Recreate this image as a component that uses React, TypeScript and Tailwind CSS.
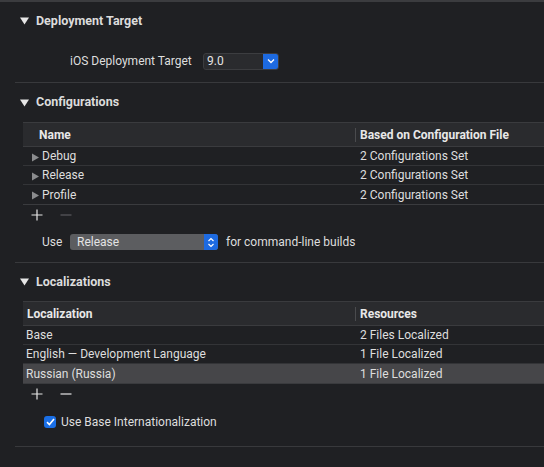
import React from 'react';

const font = { fontFamily: 'Roboto, "Noto Sans", sans-serif' };

function DownTriangle() {
  return (
    <svg width="9" height="8" viewBox="0 0 9 8" className="shrink-0">
      <path d="M0 0.5 H9 L4.5 7.5 Z" fill="#e6e6e6" />
    </svg>
  );
}

function SectionHeader({ title, height }: { title: string; height: string }) {
  return (
    <div className={`flex items-center gap-[7px] pl-[20px] ${height}`}>
      <DownTriangle />
      <span className="text-[12.5px] font-bold text-[#dcdcdc]">{title}</span>
    </div>
  );
}

function Separator() {
  return <div className="ml-[15px] h-px bg-[#38393c]" />;
}

function PlusMinus({ minusEnabled }: { minusEnabled: boolean }) {
  return (
    <div className="flex h-[20px] items-center gap-[17px] pl-[31px]">
      <svg width="12" height="12" viewBox="0 0 12 12">
        <path d="M6 0.5 V11.5 M0.5 6 H11.5" stroke="#e6e6e6" strokeWidth="1.2" />
      </svg>
      <svg width="12" height="12" viewBox="0 0 12 12">
        <path d="M0.5 6 H11.5" stroke={minusEnabled ? '#e6e6e6' : '#5a5b5e'} strokeWidth="1.2" />
      </svg>
    </div>
  );
}

interface Row {
  left: string;
  right: string;
  selected?: boolean;
}

function Table({
  leftHeader,
  rightHeader,
  rows,
  disclosure,
}: {
  leftHeader: string;
  rightHeader: string;
  rows: Row[];
  disclosure?: boolean;
}) {
  return (
    <div className="ml-[23px] border-t border-b border-[#3a3b3e]">
      {/* Header */}
      <div className="flex h-[24px] items-center border-b border-[#3a3b3e] bg-[#2a2b2e] text-[12px] font-bold text-[#e8e8e8]">
        <div className={`w-[332px] ${disclosure ? 'pl-[16px]' : 'pl-[4px]'}`}>{leftHeader}</div>
        <div className="h-[14px] w-px bg-[#4a4b4e]" />
        <div className="pl-[4px]">{rightHeader}</div>
      </div>
      {rows.map((row, i) => (
        <div
          key={row.left}
          className={`flex h-[19px] items-center text-[12px] text-[#dedede] ${
            i < rows.length - 1 ? 'border-b border-[#333437]' : ''
          } ${row.selected ? 'bg-[#464649]' : ''}`}
        >
          <div className="flex w-[333px] items-center pl-[3px]">
            {disclosure && (
              <svg width="10" height="9" viewBox="0 0 10 9" className="ml-[6px] mt-[2px] shrink-0">
                <path d="M0 0.5 L7 4.5 L0 8.5 Z" fill="#8b8c8e" />
              </svg>
            )}
            <span>{row.left}</span>
          </div>
          <div className="pl-[4px]">{row.right}</div>
        </div>
      ))}
    </div>
  );
}

export default function App() {
  return (
    <div className="h-[467px] w-[544px] overflow-hidden border-t-2 border-[#3b3c3f] bg-[#1f2023]" style={font}>
      {/* Deployment Target */}
      <SectionHeader title="Deployment Target" height="h-[38px]" />
      <div className="flex h-[42px] items-center pl-[70px]">
        <span className="w-[133px] text-[12px] text-[#dedede]">iOS Deployment Target</span>
        <div className="flex h-[17px] w-[76px] items-stretch overflow-hidden rounded-[3px] border border-[#3c3d40] bg-[#2a2b2e]">
          <span className="flex-1 pl-[3px] text-[12px] leading-[15px] text-[#e4e4e4]">9.0</span>
          <div className="flex w-[15px] items-center justify-center bg-[#1d6ae0]">
            <svg width="8" height="6" viewBox="0 0 8 6">
              <path d="M1 1.5 L4 4.5 L7 1.5" stroke="#ffffff" strokeWidth="1.3" fill="none" />
            </svg>
          </div>
        </div>
      </div>
      <Separator />

      {/* Configurations */}
      <SectionHeader title="Configurations" height="h-[39px]" />
      <Table
        leftHeader="Name"
        rightHeader="Based on Configuration File"
        disclosure
        rows={[
          { left: 'Debug', right: '2 Configurations Set' },
          { left: 'Release', right: '2 Configurations Set' },
          { left: 'Profile', right: '2 Configurations Set' },
        ]}
      />
      <PlusMinus minusEnabled={false} />
      <div className="flex h-[37px] items-center pb-[3px] pl-[42px] text-[12px] text-[#dedede]">
        <span className="w-[28px]">Use</span>
        <div className="flex h-[16px] w-[148px] items-stretch overflow-hidden rounded-[3px] bg-[#5c5d60]">
          <span className="flex-1 pl-[7px] leading-[16px] text-[#e4e4e4]">Release</span>
          <div className="flex w-[14px] items-center justify-center bg-[#1d6ae0]">
            <svg width="8" height="11" viewBox="0 0 8 11">
              <path d="M1.5 4 L4 1.5 L6.5 4 M1.5 7 L4 9.5 L6.5 7" stroke="#ffffff" strokeWidth="1.2" fill="none" />
            </svg>
          </div>
        </div>
        <span className="pl-[8px]">for command-line builds</span>
      </div>
      <Separator />

      {/* Localizations */}
      <SectionHeader title="Localizations" height="h-[38px]" />
      <Table
        leftHeader="Localization"
        rightHeader="Resources"
        rows={[
          { left: 'Base', right: '2 Files Localized' },
          { left: 'English — Development Language', right: '1 File Localized' },
          { left: 'Russian (Russia)', right: '1 File Localized', selected: true },
        ]}
      />
      <PlusMinus minusEnabled />
      <div className="flex h-[42px] items-center gap-[5px] pb-[6px] pl-[44px]">
        <div className="flex h-[12px] w-[12px] items-center justify-center rounded-[3px] bg-[#1a6fe6]">
          <svg width="9" height="8" viewBox="0 0 9 8">
            <path d="M1 4.2 L3.4 6.5 L8 1" stroke="#ffffff" strokeWidth="1.6" fill="none" />
          </svg>
        </div>
        <span className="text-[12px] text-[#dedede]">Use Base Internationalization</span>
      </div>
      <Separator />
    </div>
  );
}
